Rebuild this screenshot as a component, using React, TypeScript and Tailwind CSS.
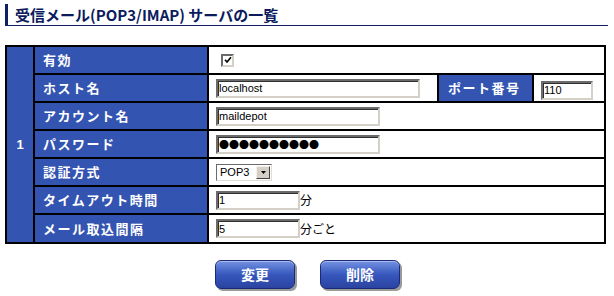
import React from 'react';

const jp = { fontFamily: '"Noto Sans CJK JP", "Liberation Sans", sans-serif' };
const latin = { fontFamily: '"Liberation Sans", "Noto Sans CJK JP", sans-serif' };

function Field({ value, w, mono }: { value: string; w: string; mono?: boolean }) {
  return (
    <input
      readOnly
      value={value}
      style={mono ? { ...jp, fontSize: '10px', letterSpacing: '0px' } : latin}
      className={`${w} h-[19px] border-2 border-t-[#6b6b6b] border-l-[#6b6b6b] border-r-[#d4d0c8] border-b-[#d4d0c8] bg-white px-[1px] text-[11px] text-black outline-none shadow-[inset_1px_1px_0_#303030]`}
    />
  );
}

function Label({ children }: { children: React.ReactNode }) {
  return (
    <td
      style={jp}
      className="border-2 border-black bg-[#3354b1] pl-[8px] text-[13px] font-bold tracking-[1.5px] text-white"
    >
      {children}
    </td>
  );
}

function Value({ children, span = 3 }: { children: React.ReactNode; span?: number }) {
  return (
    <td colSpan={span} className="border-2 border-black bg-white pl-[7px]">
      <div className="flex items-center">{children}</div>
    </td>
  );
}

function Btn({ label }: { label: string }) {
  return (
    <button
      style={jp}
      className="h-[29px] w-[80px] rounded-[6px] border border-[#1b2a78] bg-gradient-to-b from-[#7592e2] via-[#3757bd] to-[#2a43a0] text-[14px] font-bold text-white shadow-[2px_2px_0_#9a9a9a,inset_0_1px_0_#a9bcf0]"
    >
      {label}
    </button>
  );
}

export default function App() {
  return (
    <div className="h-[296px] w-[614px] bg-white pt-[4px]">
      {/* title */}
      <div className="ml-[5px] flex h-[22px] w-[603px] items-center border-b border-l-[3px] border-[#0e1f66] pl-[7px]">
        <span style={jp} className="text-[15px] font-bold leading-none text-[#0b1b5e]">
          受信メール(POP3/IMAP) サーバの一覧
        </span>
      </div>

      <table className="ml-[5px] mt-[19px] w-[599px] table-fixed border-collapse border-2 border-black">
        <colgroup>
          <col className="w-[28px]" />
          <col className="w-[174px]" />
          <col className="w-[230px]" />
          <col className="w-[95px]" />
          <col className="w-[72px]" />
        </colgroup>
        <tbody>
          <tr className="h-[28px]">
            <td
              rowSpan={7}
              style={latin}
              className="border-2 border-black bg-[#3354b1] text-center text-[13px] font-bold text-white"
            >
              1
            </td>
            <Label>有効</Label>
            <Value>
              <div className="ml-[5px] flex h-[13px] w-[13px] items-center justify-center border-2 border-t-[#6b6b6b] border-l-[#6b6b6b] border-r-[#d4d0c8] border-b-[#d4d0c8] bg-white">
                <svg width="8" height="8" viewBox="0 0 8 8">
                  <path d="M1 3.8 L3 6 L7 1.2" stroke="#000" strokeWidth="1.6" fill="none" />
                </svg>
              </div>
            </Value>
          </tr>
          <tr className="h-[28px]">
            <Label>ホスト名</Label>
            <Value span={1}>
              <Field value="localhost" w="w-[204px]" />
            </Value>
            <td
              style={jp}
              className="border-2 border-black bg-[#3354b1] pl-[9px] text-[13px] font-bold tracking-[1.5px] text-white"
            >
              ポート番号
            </td>
            <td className="border-2 border-black bg-white pl-[7px]">
              <Field value="110" w="w-[52px]" />
            </td>
          </tr>
          <tr className="h-[28px]">
            <Label>アカウント名</Label>
            <Value>
              <Field value="maildepot" w="w-[164px]" />
            </Value>
          </tr>
          <tr className="h-[28px]">
            <Label>パスワード</Label>
            <Value>
              <Field value="●●●●●●●●●●" w="w-[164px]" mono />
            </Value>
          </tr>
          <tr className="h-[28px]">
            <Label>認証方式</Label>
            <Value>
              <div className="flex h-[17px] w-[56px] items-center border border-t-[#6b6b6b] border-l-[#6b6b6b] border-r-[#e0ddd6] border-b-[#e0ddd6] bg-white">
                <span style={latin} className="flex-1 pl-[3px] text-[11px] leading-none text-black">
                  POP3
                </span>
                <div className="mr-[1px] flex h-[13px] w-[14px] items-center justify-center border border-t-[#f4f2ee] border-l-[#f4f2ee] border-r-[#404040] border-b-[#404040] bg-[#d4d0c8]">
                  <svg width="5" height="3" viewBox="0 0 5 3">
                    <path d="M0 0 H5 L2.5 3 Z" fill="#000" />
                  </svg>
                </div>
              </div>
            </Value>
          </tr>
          <tr className="h-[28px]">
            <Label>タイムアウト時間</Label>
            <Value>
              <Field value="1" w="w-[84px]" />
              <span style={jp} className="text-[12px] text-black">分</span>
            </Value>
          </tr>
          <tr className="h-[29px]">
            <Label>メール取込間隔</Label>
            <Value>
              <Field value="5" w="w-[84px]" />
              <span style={jp} className="text-[12px] text-black">分ごと</span>
            </Value>
          </tr>
        </tbody>
      </table>

      <div className="ml-[215px] mt-[16px] flex gap-[25px]">
        <Btn label="変更" />
        <Btn label="削除" />
      </div>
    </div>
  );
}
